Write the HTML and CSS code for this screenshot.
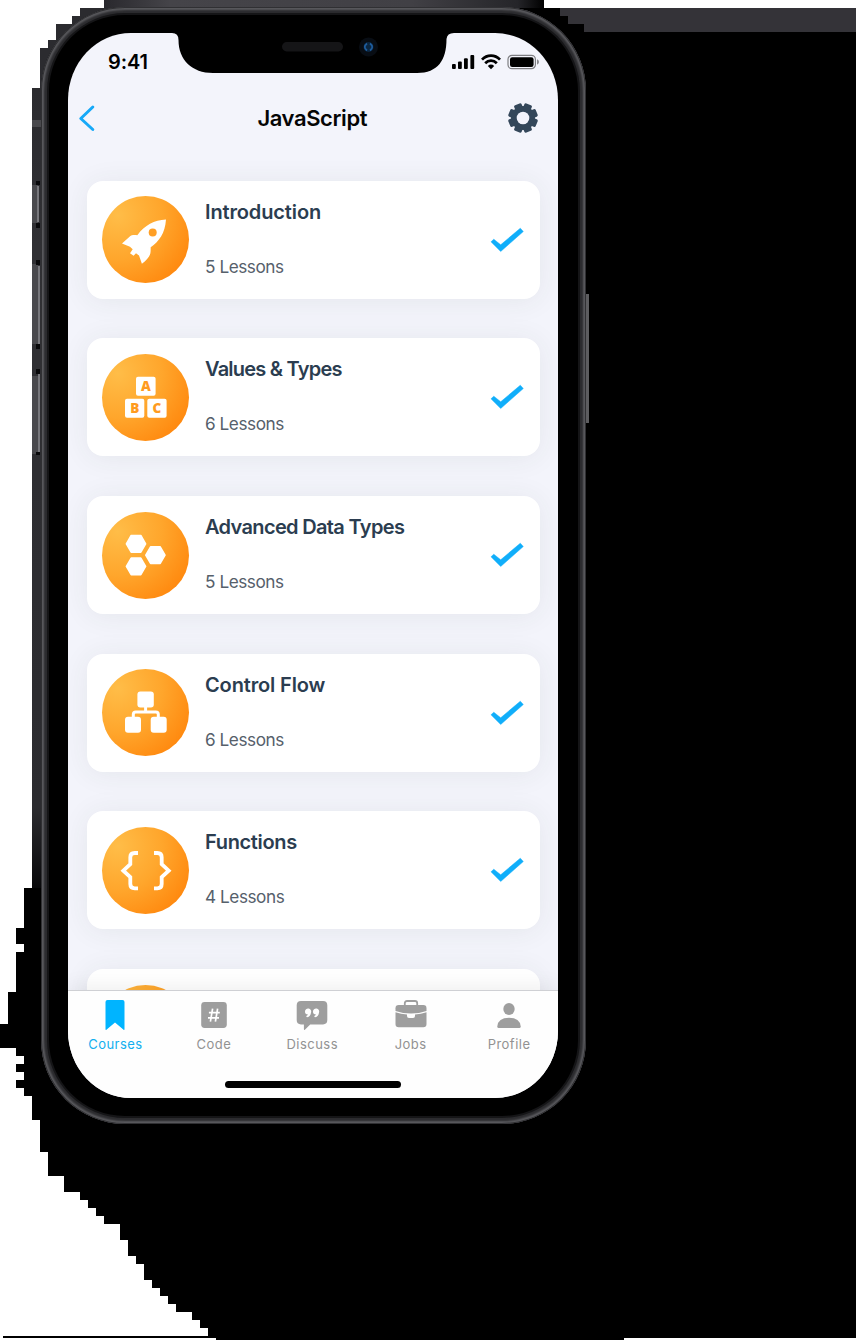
FILE: index.html
```html
<!DOCTYPE html>
<html lang="en">
<head>
<meta charset="utf-8">
<title>JavaScript</title>
<link rel="stylesheet" href="styles.css">
</head>
<body>
<svg class="backdrop" viewBox="0 0 860 1340" shape-rendering="crispEdges" aria-hidden="true">
  <defs>
    <linearGradient id="side" x1="0" y1="88" x2="0" y2="888" gradientUnits="userSpaceOnUse">
      <stop offset="0" stop-color="#2b2b2f"/><stop offset=".2" stop-color="#303034"/><stop offset=".9" stop-color="#2b2b2f"/><stop offset="1" stop-color="#08080a"/>
    </linearGradient>
    <linearGradient id="topbar" x1="104" y1="0" x2="544" y2="0" gradientUnits="userSpaceOnUse">
      <stop offset="0" stop-color="#29282d"/><stop offset=".15" stop-color="#454449"/><stop offset=".7" stop-color="#414045"/><stop offset=".94" stop-color="#252529"/><stop offset="1" stop-color="#000"/>
    </linearGradient>
  </defs>
  <path d="M104 0H544V8H856V1338H624V1340H216V1338H3V1336H208V1328H200V1320H192V1312H176V1304H168V1296H160V1288H152V1280H144V1264H136V1256H128V1240H120V1224H104V1216H96V1208H88V1200H80V1192H64V1176H48V1152H40V1120H32V1096H24V1088H16V1080H24V1072H16V1064H24V1056H16V1048H0V1024H8V992H16V952H24V944H16V928H24V888H32V88H40V48H48V40H56V24H72V16H80V8H104Z"/>
  <path fill="url(#side)" d="M32 88H40V48H48V40H56V24H72V16H80V8H140L46 120V888H32Z"/>
  <path fill="url(#topbar)" d="M104 0H544V8H104Z"/>
  <path fill="#343338" d="M560 8H856V32H584V24H568V16H560Z"/>
  <path fill="#49494d" d="M32 185h6v38h-6zM32 264h6v80h-6zM32 376h6v78h-6zM32 120h9v7h-9z"/>
  <path fill="#77777c" d="M37 186h2v36h-2zM38 266h2v78h-2zM38 374h2v78h-2z"/>
  <path fill="#08080a" d="M36 181h4v4h-4zM36 223h4v5h-4zM36 260h4v5h-4zM36 344h4v5h-4zM36 369h4v5h-4zM36 452h4v3h-4z"/>
  <path fill="#5d5d60" d="M585 294h4v129h-4z"/>
</svg>

<main class="phone">
  <div class="screen">
    <header class="status">
      <span class="time">9:41</span>
      <svg class="indicators" width="88" height="16" viewBox="0 0 88 16">
        <rect x="1" y="10" width="3.8" height="5" rx="1"/><rect x="7" y="7.5" width="3.8" height="7.5" rx="1"/><rect x="13" y="4.2" width="3.8" height="10.8" rx="1"/><rect x="19.4" y="1" width="3.8" height="14" rx="1"/>
        <g fill="none" stroke="#000" stroke-width="2.7"><path d="M31 5.7C36 .3 44 .3 49 5.7"/><path d="M34.2 9.2C37.5 5.7 42.5 5.7 45.8 9.2"/></g>
        <path d="M40 15.2L36.8 11.9Q40 9.2 43.2 11.9Z"/>
        <rect x="57" y="1.3" width="27.4" height="13.4" rx="4" fill="none" stroke="#7e7e82" stroke-width="1.2"/><rect x="59" y="3.2" width="23.6" height="9.8" rx="2.2"/><path fill="#88888c" d="M86 5.3q2 .8 2 2.7t-2 2.7z"/>
      </svg>
    </header>
    <nav class="navbar">
      <svg class="back" width="18" height="28" viewBox="0 0 18 28"><path d="M14.8 3L2.8 14.5L14.8 25.5"/></svg>
      <h1>JavaScript</h1>
      <svg class="gear" width="30" height="30" viewBox="-15 -15 30 30">
        <g fill="#34475a"><circle r="12"/>
        <g transform="rotate(22.5)"><rect x="-4" y="-14.8" width="8" height="29.6" rx="1.6"/><rect x="-14.8" y="-4" width="29.6" height="8" rx="1.6"/></g>
        <g transform="rotate(67.5)"><rect x="-4" y="-14.8" width="8" height="29.6" rx="1.6"/><rect x="-14.8" y="-4" width="29.6" height="8" rx="1.6"/></g></g>
        <circle r="6.3" fill="#f3f4fc"/>
      </svg>
    </nav>

    <section class="list">
      <article class="card">
        <svg class="badge" viewBox="0 0 87 87"><path d="M64 23.5C52 24 43 29 35.3 39.2C32 38.6 29.5 39 27.8 40.4L20 47.5L28 50.8L30.7 53.2L28 57.3L31.6 59.8L34 57.2L37 59.6L39.9 67.8C44 64.5 47 61.5 48 58.5C48.9 56 48.6 53.5 48.7 51.2C57 45.5 63 37.5 64 23.5Z"/><circle class="hole" cx="50.7" cy="36.5" r="4"/></svg>
        <div class="info"><h2 class="snug">Introduction</h2><p>5 Lessons</p></div>
        <svg class="check" viewBox="0 0 33 24"><path d="M0 13.8L2.8 11.2L9.7 16.8L29.3.2L32.3 3.5L9.7 23.5Z"/></svg>
      </article>
      <article class="card">
        <svg class="badge" viewBox="0 0 87 87"><rect x="34" y="22.8" width="19.6" height="19" rx="2"/><rect x="23" y="44.8" width="19.3" height="19" rx="2"/><rect x="45.3" y="44.8" width="19.3" height="19" rx="2"/><g class="letters"><text x="43.8" y="37.2">A</text><text x="32.7" y="59.2">B</text><text x="54.9" y="59.2">C</text></g></svg>
        <div class="info"><h2 class="tightest">Values &amp; Types</h2><p>6 Lessons</p></div>
        <svg class="check" viewBox="0 0 33 24"><path d="M0 13.8L2.8 11.2L9.7 16.8L29.3.2L32.3 3.5L9.7 23.5Z"/></svg>
      </article>
      <article class="card">
        <svg class="badge" viewBox="0 0 87 87"><g stroke="#fff" stroke-width="1.6" stroke-linejoin="round"><path d="M24.4 31.8L29.2 23.5H38.8L43.6 31.8L38.8 40.1H29.2Z"/><path d="M24.4 54.4L29.2 46.1H38.8L43.6 54.4L38.8 62.7H29.2Z"/><path d="M43.8 43.1L48.6 34.8H58.2L63 43.1L58.2 51.4H48.6Z"/></g></svg>
        <div class="info"><h2 class="tighter">Advanced Data Types</h2><p>5 Lessons</p></div>
        <svg class="check" viewBox="0 0 33 24"><path d="M0 13.8L2.8 11.2L9.7 16.8L29.3.2L32.3 3.5L9.7 23.5Z"/></svg>
      </article>
      <article class="card">
        <svg class="badge" viewBox="0 0 87 87"><rect x="35.4" y="22.5" width="16.4" height="15.9" rx="3"/><rect x="23" y="47.8" width="16" height="15.9" rx="3"/><rect x="48.7" y="47.8" width="16" height="15.9" rx="3"/><path fill="none" stroke="#fff" stroke-width="3" d="M43.6 38V43M31.3 48V45.5Q31.3 43 33.8 43H53.8Q56.3 43 56.3 45.5V48"/></svg>
        <div class="info"><h2 class="snug">Control Flow</h2><p>6 Lessons</p></div>
        <svg class="check" viewBox="0 0 33 24"><path d="M0 13.8L2.8 11.2L9.7 16.8L29.3.2L32.3 3.5L9.7 23.5Z"/></svg>
      </article>
      <article class="card">
        <svg class="badge" viewBox="0 0 87 87"><path fill="none" stroke="#fff" stroke-width="3.8" d="M36 26H32.7Q28.3 26 28.3 30.3V37.2L21.3 43.7L28.3 50.2V57Q28.3 61.3 32.7 61.3H36M52 26H55.3Q59.7 26 59.7 30.3V37.2L66.7 43.7L59.7 50.2V57Q59.7 61.3 55.3 61.3H52"/></svg>
        <div class="info"><h2 class="tight">Functions</h2><p>4 Lessons</p></div>
        <svg class="check" viewBox="0 0 33 24"><path d="M0 13.8L2.8 11.2L9.7 16.8L29.3.2L32.3 3.5L9.7 23.5Z"/></svg>
      </article>
      <article class="card"><svg class="badge" viewBox="0 0 87 87"></svg></article>
    </section>

    <footer class="tabbar">
      <div class="tabs">
        <div class="tab active"><svg viewBox="0 0 32 32"><path d="M6.5 3Q6.5 1 8.5 1H23.5Q25.5 1 25.5 3V30Q25.5 31.6 24.3 30.4L16 23.4L7.7 30.4Q6.5 31.6 6.5 30Z"/></svg><span>Courses</span></div>
        <div class="tab"><svg viewBox="0 0 32 32"><rect x="3.2" y="3" width="25.6" height="26" rx="3.4"/><path class="cut" d="M14.6 9.6L12.4 22.7M19.6 9.6L17.4 22.7M10.9 13.6H21.8M10 18.8H21"/></svg><span>Code</span></div>
        <div class="tab"><svg viewBox="0 0 32 32"><path d="M5 2H27Q31.3 2 31.3 6.3V21Q31.3 25.4 27 25.4H14.2L8.9 30.7Q7.9 31.3 7.9 30V25.4H5Q.7 25.4.7 21V6.3Q.7 2 5 2Z"/><path class="quote" d="M9 12.7a3.1 3.1 0 1 1 6 1Q14.4 17.3 11.3 18.2Q10 18.1 10.3 17Q11.8 16.3 12 15.4Q9 15.4 9 12.7ZM17 12.7a3.1 3.1 0 1 1 6 1Q22.4 17.3 19.3 18.2Q18 18.1 18.3 17Q19.8 16.3 20 15.4Q17 15.4 17 12.7Z"/></svg><span>Discuss</span></div>
        <div class="tab"><svg viewBox="0 0 32 32"><path fill="none" stroke="#9e9e9e" stroke-width="1.8" d="M9.8 7V4.3Q9.8 2 12.1 2H19.9Q22.2 2 22.2 4.3V7"/><path d="M3.7 6H28.3Q31.5 6 31.5 9.2V12Q24 14.6 16 14.6T.5 12V9.2Q.5 6 3.7 6Z"/><path d="M.5 13.3Q6 15.1 12 15.6V17Q12 19 14 19H18Q20 19 20 17V15.6Q26 15.1 31.5 13.3V25Q31.5 28.2 28.3 28.2H3.7Q.5 28.2.5 25Z"/></svg><span>Jobs</span></div>
        <div class="tab"><svg viewBox="0 0 32 32"><ellipse cx="16" cy="10" rx="5.7" ry="6.1"/><path d="M4.3 27.5Q5 18.8 16 18.8T27.7 27.5Q27.7 29 26.3 29H5.7Q4.3 29 4.3 27.5Z"/></svg><span>Profile</span></div>
      </div>
      <div class="home"></div>
    </footer>

    <svg class="notch" width="290" height="42" viewBox="0 0 290 42"><path d="M0 0H290V1H284Q277 1 276.5 7C276.5 28 268 41 247 41H43C22 41 8.5 28 8.5 8Q8.5 1 2 1H0Z"/><rect x="112" y="10" width="61" height="9.5" rx="4.7" fill="#151517"/><circle cx="198.500" cy="15" r="9.5" fill="#080d14"/><circle cx="198.5" cy="15" r="5" fill="#0b2742"/><path fill="none" stroke="#1e5c9d" stroke-width="1.7" d="M197 11.5Q192.500 15 197 18.5M200 11.5Q204.5 15 200 18.5"/></svg>
  </div>
</main>
</body>
</html>
```
FILE: styles.css
```css
* { box-sizing: border-box; }
body { margin: 0; width: 860px; height: 1340px; background: #fff; overflow: hidden; font-family: Inter, Roboto, sans-serif; }
.backdrop { position: absolute; left: 0; top: 0; width: 860px; height: 1340px; z-index: -1; }

.phone {
  width: 545px; height: 1117px; margin: 7px 0 0 41px; padding: 26px 27.5px 26px 26.5px;
  border-radius: 84px; background: #000;
  box-shadow: inset 0 0 0 1px #303033, inset 0 0 2px 3px #5a5a5e, inset 0 0 0 6px #2b2b2e, inset 0 0 0 8px #151517;
}
.screen {
  position: relative; display: flex; flex-direction: column; overflow: hidden;
  width: 490.5px; height: 1064.5px; border-radius: 63px / 67px; background: #f3f4fb;
}
.notch { position: absolute; left: 102.5px; top: -1px; }

.status { flex: none; display: flex; align-items: center; justify-content: space-between; height: 58px; padding: 0 19px 0 40.5px; }
.time { font-size: 20px; font-weight: 600; letter-spacing: -0.1px; }

.navbar { flex: none; display: grid; grid-template-columns: 60px 1fr 60px; align-items: center; height: 55px; padding: 0 20px 2px 10px; }
.back path { fill: none; stroke: #16a9f8; stroke-width: 3; stroke-linecap: round; stroke-linejoin: round; }
.navbar h1 { margin: 0; padding-left: 9px; text-align: center; font-size: 22px; font-weight: 600; letter-spacing: -0.4px; color: #050505; }
.gear { justify-self: end; }

.list { flex: 1; min-height: 0; overflow: hidden; display: flex; flex-direction: column; gap: 39.7px; padding: 34.7px 18.5px 0 19.5px; }
.card {
  flex: none; display: flex; gap: 16px; height: 118px; padding: 15.5px 16px 15.5px 15px;
  border-radius: 16px; background: #fff; box-shadow: 0 2px 28px rgba(60, 68, 60, .075);
}
.badge { flex: none; width: 87px; height: 87px; border-radius: 50%; fill: #fff; background: radial-gradient(circle at 18% 22%, #ffbd48 0, #ffa62c 45%, #ff8309 90%); }
.badge .hole { fill: #ff9f25; }
.letters { fill: #ff9b20; font: 800 13.5px "Open Sans", sans-serif; text-anchor: middle; }
.info { flex: 1; padding-top: 3.5px; white-space: nowrap; }
.info h2 { margin: 0 0 31px; font-size: 20px; line-height: 24px; font-weight: 600; color: #2b3d50; }
.info h2.snug { letter-spacing: -0.13px; }
.info h2.tight { letter-spacing: -0.35px; }
.info h2.tighter { letter-spacing: -0.66px; }
.info h2.tightest { letter-spacing: -0.77px; }
.info p { margin: 0; font-size: 17.2px; line-height: 24px; color: #56606b; letter-spacing: -0.45px; }
.check { flex: none; align-self: center; width: 33px; height: 24px; fill: #10aefa; stroke: #10aefa; stroke-width: .5; overflow: visible; }

.tabbar {
  position: relative; flex: none; display: flex; flex-direction: column; align-items: center; justify-content: space-between;
  height: 108px; padding-bottom: 9.5px; background: #fefefe; border-top: 1px solid #cfd0d4; box-shadow: 0 -3px 20px rgba(0, 0, 0, .07);
}
.tabs { display: flex; width: 492px; margin-left: -1px; padding-top: 8px; }
.tab { flex: 1; display: flex; flex-direction: column; align-items: center; gap: 5px; font-size: 13px; line-height: 17px; font-weight: 400; letter-spacing: .47px; color: #929292; }
.tab svg { width: 32px; height: 32px; fill: #9e9e9e; }
.tab.active { color: #12aeef; }
.tab.active svg { fill: #00b4ff; }
.tab .cut { fill: none; stroke: #fff; stroke-width: 1.7; }
.tab .quote { fill: #fff; }
.home { width: 176px; height: 7px; border-radius: 4px; background: #000; }
```
